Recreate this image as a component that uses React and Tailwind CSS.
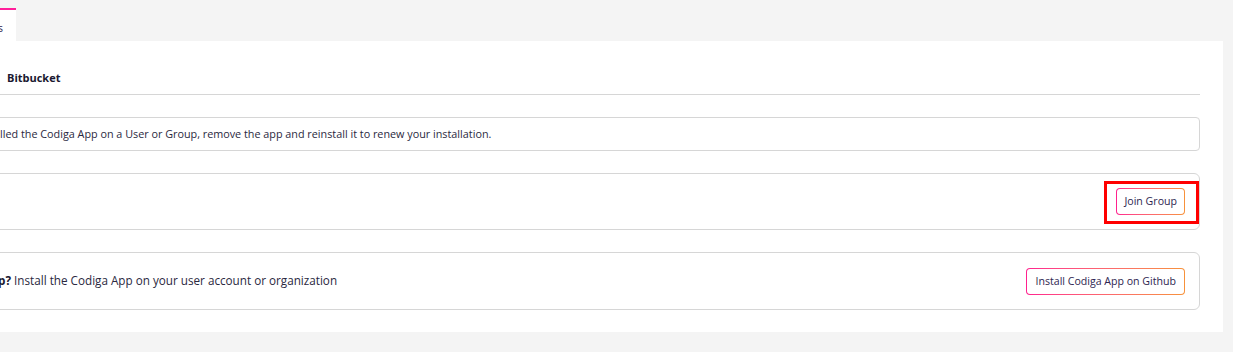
import React from 'react';

const font = { fontFamily: '"Open Sans", "Noto Sans", sans-serif' };

const GradientButton = ({ children, pad = 'px-[8px]' }) => (
  <div className="rounded-[4px] bg-gradient-to-r from-[#ff1f8e] to-[#f7923a] p-px">
    <button className={`block rounded-[3px] bg-white ${pad} h-[25px] text-[10.6px] leading-[25px] text-[#2e2550] whitespace-nowrap`}>
      {children}
    </button>
  </div>
);

const App = () => {
  return (
    <div className="h-[352px] w-[1233px] overflow-hidden bg-[#f4f4f4] text-[#25243f]" style={font}>
      {/* Tabs */}
      <div className="flex pt-[8px]">
        <div className="flex w-[16px] justify-end">
          <div className="shrink-0 border-t-[2px] border-[#ff1f9a] bg-white pr-[13px] h-[33px] text-[11px] leading-[36px] text-[#2e2550] whitespace-nowrap">
            Integrations
          </div>
        </div>
      </div>

      {/* Panel */}
      <div className="w-[1223px] bg-white pr-[23px] pb-[22px]">
        <div className="-ml-[40px] flex flex-col">
          <div className="border-b border-[#d6d6d6] pt-[28px] pb-[8px] pl-[47px]">
            <div className="text-[11px] font-bold leading-[17px] text-[#1a1830]">Bitbucket</div>
          </div>

          <div className="mt-[22px] flex h-[34px] items-center rounded-[4px] border border-[#d6d6d6] pl-[15px] overflow-hidden">
            <p className="-ml-[98px] whitespace-nowrap text-[10.8px] text-[#2a2840]">
              If you have already installed the Codiga App on a User or Group, remove the app and reinstall it to renew your installation.
            </p>
          </div>

          <div className="mt-[22px] flex h-[57px] items-center justify-end rounded-[6px] border border-[#d6d6d6] pr-[14px]">
            <div className="relative">
              <div className="pointer-events-none absolute -left-[12px] -right-[14px] -top-[7px] -bottom-[9px] border-[3px] border-[#ff0000]" />
              <GradientButton pad="px-[7px]">Join Group</GradientButton>
            </div>
          </div>

          <div className="mt-[22px] flex h-[58px] items-center justify-between rounded-[6px] border border-[#d6d6d6] pr-[14px] overflow-hidden">
            <p className="-ml-[79px] whitespace-nowrap text-[11.7px] text-[#2a2840]">
              <span className="font-bold text-[#1a1830]">Don't see your Group?</span> Install the Codiga App on your user account or organization
            </p>
            <GradientButton>Install Codiga App on Github</GradientButton>
          </div>
        </div>
      </div>
    </div>
  );
};

export default App;
